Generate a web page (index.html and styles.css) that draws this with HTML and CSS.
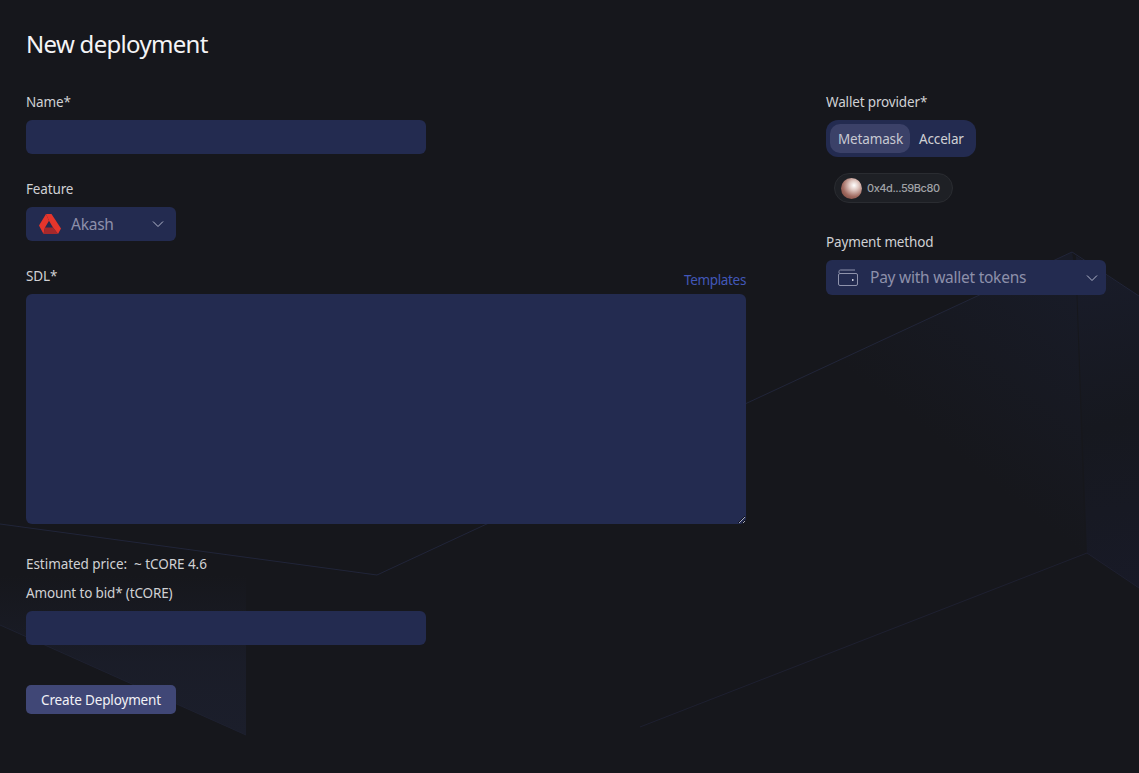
FILE: index.html
```html
<!DOCTYPE html>
<html lang="en">
<head>
<meta charset="utf-8">
<title>New deployment</title>
<link rel="stylesheet" href="styles.css">
</head>
<body>
<svg class="backdrop" viewBox="0 0 1139 773" width="1139" height="773" aria-hidden="true">
  <defs>
    <linearGradient id="fadeLeft" x1="0" y1="575" x2="0" y2="735" gradientUnits="userSpaceOnUse">
      <stop offset="0" stop-color="#1b1e2b" stop-opacity="0"/>
      <stop offset="0.55" stop-color="#1b1e2b" stop-opacity="0.8"/>
      <stop offset="1" stop-color="#1b1e2b"/>
    </linearGradient>
    <linearGradient id="fadeRight" x1="1139" y1="590" x2="1075" y2="260" gradientUnits="userSpaceOnUse">
      <stop offset="0" stop-color="#181a27"/>
      <stop offset="0.5" stop-color="#16181f"/>
      <stop offset="1" stop-color="#191c2a"/>
    </linearGradient>
    <linearGradient id="fadeFace" x1="1076" y1="290" x2="950" y2="450" gradientUnits="userSpaceOnUse">
      <stop offset="0" stop-color="#181b27"/>
      <stop offset="1" stop-color="#181b27" stop-opacity="0"/>
    </linearGradient>
  </defs>
  <polygon points="0,540 246,575 246,735 0,625" fill="url(#fadeLeft)"/>
  <polygon points="1072,252 1076,280 1085,553 860,553 747,404" fill="url(#fadeFace)"/>
  <polygon points="1076,256 1139,296 1139,588 1087,553" fill="url(#fadeRight)"/>
  <polyline points="0,524 377,575 1072,252 1139,296" fill="none" stroke="#212539"/>
  <polyline points="640,727 1087,553 1139,588" fill="none" stroke="#1e2030"/>
  <line x1="0" y1="625" x2="246" y2="735" stroke="#1e2130"/>
</svg>

<main class="page">
  <h1 class="title">New deployment</h1>
  <div class="columns">
    <form class="form-main">
      <label class="label" for="name">Name*</label>
      <input class="input" id="name" type="text">

      <span class="label label-feature">Feature</span>
      <div class="select select-feature">
        <svg class="akash" viewBox="0 0 22 20" width="22" height="20" aria-hidden="true">
          <path d="M7 0H12.5L22 14.5L19 20L14 13.5L10 6.8Z" fill="#e5352b"/>
          <path d="M7 0L10 6.8L6 13.5L4.5 20L0 11.5Z" fill="#e5352b"/>
          <path d="M6 13.5H14L19 20H4.5Z" fill="#a5282b"/>
        </svg>
        <span class="select-text">Akash</span>
        <svg class="chevron" viewBox="0 0 12 8" width="12" height="8" aria-hidden="true"><path d="M1 1.5L6 6.5L11 1.5" fill="none" stroke="#b4b8cc" stroke-width="1"/></svg>
      </div>

      <div class="sdl-head">
        <label class="label" for="sdl">SDL*</label>
        <a class="link" href="#">Templates</a>
      </div>
      <textarea class="textarea" id="sdl"></textarea>

      <p class="estimate">Estimated price:&nbsp; ~ tCORE 4.6</p>
      <label class="label" for="bid">Amount to bid* (tCORE)</label>
      <input class="input" id="bid" type="text">

      <button class="submit" type="button">Create Deployment</button>
    </form>

    <aside class="form-side">
      <span class="label">Wallet provider*</span>
      <div class="toggle">
        <span class="toggle-item is-active">Metamask</span>
        <span class="toggle-item">Accelar</span>
      </div>
      <div class="wallet-pill">
        <span class="avatar"></span>
        <span class="address">0x4d...59Bc80</span>
      </div>
      <span class="label label-payment">Payment method</span>
      <div class="select select-payment">
        <svg class="wallet-icon" viewBox="0 0 21 17" width="21" height="17" aria-hidden="true">
          <path d="M1 4V2.5C1 1.5 1.6 1 2.5 1H17" fill="none" stroke="#8f93ac" stroke-width="1"/>
          <rect x="0.5" y="4.5" width="19" height="12" rx="1.5" fill="none" stroke="#8f93ac" stroke-width="1"/>
          <rect x="14" y="10" width="1.5" height="2" fill="#c4c7d6"/>
        </svg>
        <span class="select-text">Pay with wallet tokens</span>
        <svg class="chevron" viewBox="0 0 12 8" width="12" height="8" aria-hidden="true"><path d="M1 1.5L6 6.5L11 1.5" fill="none" stroke="#b4b8cc" stroke-width="1"/></svg>
      </div>
    </aside>
  </div>
</main>
</body>
</html>
```
FILE: styles.css
```css
* { box-sizing: border-box; }
html, body { height: 100%; }
body {
  margin: 0;
  background: #16171c;
  color: #d0d1d4;
  font-family: "Noto Sans", "Open Sans", sans-serif;
  font-size: 13.5px;
  letter-spacing: -0.15px;
  overflow: hidden;
}
.backdrop { position: absolute; inset: 0; }
.page { position: relative; padding: 28px 33px 0 26px; }
.title {
  margin: 0 0 33px;
  font-size: 24px;
  line-height: 32px;
  font-weight: 400;
  letter-spacing: -0.7px;
  color: #f4f4f6;
}
.columns { display: flex; justify-content: space-between; }
.form-main { width: 720px; display: flex; flex-direction: column; align-items: flex-start; }
.form-side { width: 280px; display: flex; flex-direction: column; align-items: flex-start; }
.label { display: block; height: 18px; margin-bottom: 9px; line-height: 18px; color: #d0d1d4; }
.input {
  display: block;
  width: 400px;
  height: 34px;
  border: 0;
  border-radius: 6px;
  background: #232b50;
}
.label-feature { margin-top: 26px; }
.select {
  display: flex;
  align-items: center;
  border-radius: 6px;
  background: #232b50;
}
.select-feature { width: 150px; height: 34px; padding: 0 12px 0 13px; }
.select-payment { width: 280px; height: 35px; padding: 0 8px 0 12px; }
.select-payment .select-text { margin-top: -2px; }
.select-text { flex: 1; font-size: 15.5px; letter-spacing: -0.25px; color: #8d90aa; }
.akash { margin-right: 10px; }
.wallet-icon { margin-right: 11px; }
.sdl-head {
  width: 100%;
  height: 27px;
  margin-top: 26px;
  display: flex;
  justify-content: space-between;
  align-items: flex-start;
}
.link { margin-top: 4px; line-height: 18px; letter-spacing: -0.35px; color: #4257b8; text-decoration: none; }
.textarea {
  display: block;
  width: 720px;
  height: 230px;
  margin: 0;
  border: 0;
  border-radius: 6px;
  background: #232b50;
}
.estimate { margin: 31px 0 0; height: 18px; line-height: 18px; letter-spacing: -0.05px; color: #d0d1d4; }
.estimate + .label { margin-top: 11px; }
.submit {
  width: 150px;
  height: 29px;
  margin-top: 40px;
  padding: 0;
  border: 0;
  border-radius: 5px;
  background: #404776;
  color: #f2f2f6;
  font: inherit;
  letter-spacing: inherit;
}
.toggle {
  display: flex;
  align-items: center;
  width: 150px;
  height: 37px;
  padding: 0 4px;
  border-radius: 12px;
  background: #232b50;
}
.toggle-item { height: 29px; padding: 0 9px; line-height: 31px; color: #d0d1d4; }
.toggle-item.is-active { width: 80px; padding: 0 8px; border-radius: 10px; background: #3b4168; white-space: nowrap; color: #c8c9d2; }
.wallet-pill {
  display: flex;
  align-items: center;
  width: 119px;
  height: 30px;
  margin: 16px 0 30px 8px;
  padding-left: 6px;
  border: 1px solid #2a2c31;
  border-radius: 15px;
  background: #1e2025;
}
.avatar {
  width: 21px;
  height: 21px;
  margin-right: 5px;
  border-radius: 50%;
  background: radial-gradient(circle at 62% 35%, #fff 0, #e0c8c2 25%, #a06a60 60%, #6e3a30 100%);
}
.address { font-family: "Inter", "Liberation Sans", sans-serif; font-size: 11px; font-weight: 500; letter-spacing: -0.45px; color: #a0a2a6; }
```
